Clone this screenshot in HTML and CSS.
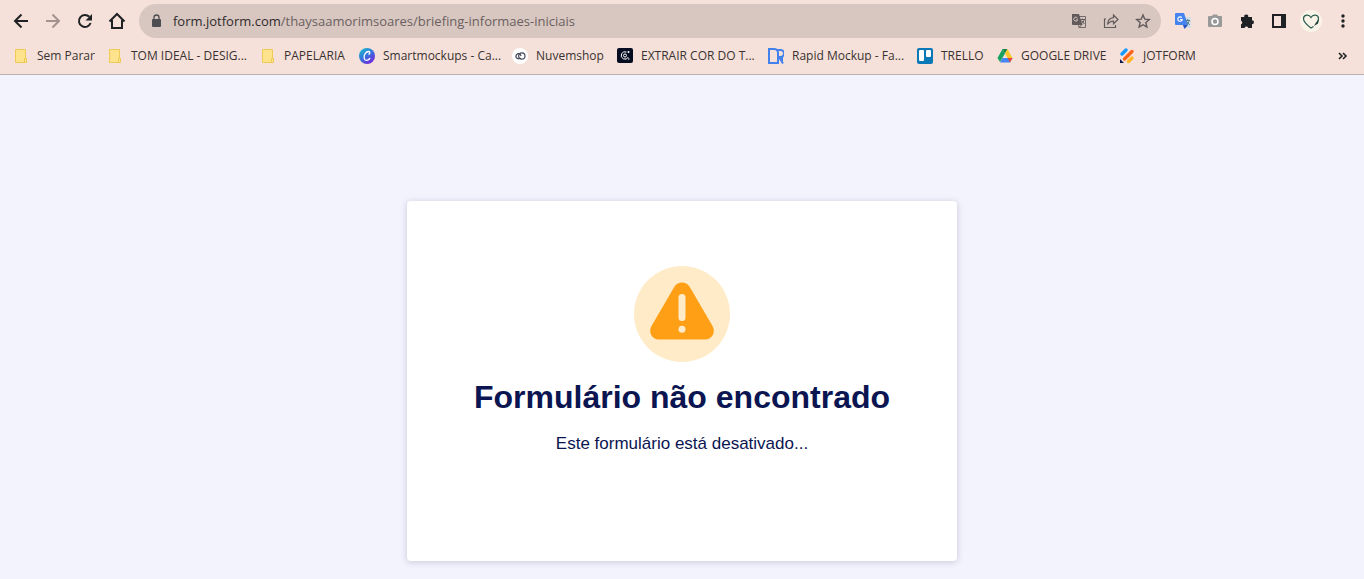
FILE: index.html
```html
<!DOCTYPE html>
<html lang="pt-BR">
<head>
    <meta charset="UTF-8">
    <meta name="viewport" content="width=device-width, initial-scale=1.0">
    <title>Formulário não encontrado</title>
    <link rel="stylesheet" href="styles.css">
</head>
<body>
    <header class="browser">
        <div class="toolbar">
            <nav class="nav-buttons">
                <button class="icon-button" aria-label="Voltar">
                    <svg width="16" height="16" viewBox="0 0 16 16" fill="none" stroke="#202124" stroke-width="2"><path d="M15 8H2.500M8.500 1.500L2 8l6.500 6.500"/></svg>
                </button>
                <button class="icon-button" aria-label="Avançar">
                    <svg width="16" height="16" viewBox="0 0 16 16" fill="none" stroke="#a3938e" stroke-width="2"><path d="M1 8h12.500M7.500 1.500L14 8l-6.500 6.500"/></svg>
                </button>
                <button class="icon-button" aria-label="Recarregar">
                    <svg width="16" height="16" viewBox="0 0 16 16"><path d="M13.600 10A6 6 0 1 1 12.300 3.800" fill="none" stroke="#202124" stroke-width="2"/><path d="M15 1v6.500H8.500z" fill="#202124"/></svg>
                </button>
                <button class="icon-button" aria-label="Página inicial">
                    <svg width="18" height="18" viewBox="0 0 18 18" fill="none" stroke="#202124" stroke-width="2"><path d="M1.500 9.500L9 2l7.500 7.500M4 8v8h10V8"/></svg>
                </button>
            </nav>
            <div class="address-bar">
                <svg class="lock" width="10" height="14" viewBox="0 0 10 14"><rect x="1" y="5" width="9" height="8" rx="1" fill="#4d4e52"/><path d="M3 5.500V3.500a2.500 2.500 0 0 1 5 0v2" fill="none" stroke="#4d4e52" stroke-width="1.300"/></svg>
                <div class="url"><span class="host">form.jotform.com</span>/thaysaamorimsoares/briefing-informaes-iniciais</div>
                <button class="icon-button" aria-label="Traduzir">
                    <svg width="16" height="16" viewBox="0 0 16 16"><path d="M6 3.500h8.500v11H8z" fill="none" stroke="#746a69"/><path d="M1 1h7l3.500 11H2a1 1 0 0 1-1-1z" fill="#625b5b"/><path d="M6.500 5.100A2 2 0 1 0 6.700 6.800H5" fill="none" stroke="#d8c7c1"/><path d="M9.500 6.500H14M11.700 5.500v1M13.200 6.500c-.3 2-1.500 3.500-3 4.500M10.500 7.500l3 3.500M8 14.500l2.500-2.500" fill="none" stroke="#625b5b"/></svg>
                </button>
                <button class="icon-button" aria-label="Compartilhar">
                    <svg width="16" height="16" viewBox="0 0 16 16" fill="none" stroke="#625b5b" stroke-width="1.200"><path d="M3 6H1.500v8.500h11V12"/><path d="M4.500 11.500c.3-4 2.500-6.500 6-6.800V2l4.500 4.500-4.500 4.300V8.200c-2.500 0-4.500 1-6 3.300z"/></svg>
                </button>
                <button class="icon-button" aria-label="Adicionar aos favoritos">
                    <svg width="16" height="16" viewBox="0 0 16 16" fill="none" stroke="#5f5858" stroke-width="1.400"><path d="M8 2l1.800 4.200 4.500.4-3.400 3 1 4.500L8 11.700l-3.900 2.400 1-4.500-3.400-3 4.500-.4z"/></svg>
                </button>
            </div>
            <div class="extensions">
                <button class="icon-button" aria-label="Google Tradutor">
                    <svg width="16" height="16" viewBox="0 0 16 16"><path d="M6 4h9a1 1 0 0 1 1 1v9a1 1 0 0 1-1 1H8z" fill="#d3dde8"/><path d="M1 0h8l4 12H1a1 1 0 0 1-1-1V1a1 1 0 0 1 1-1z" fill="#4584f0"/><path d="M8 12h5l-3.500 4z" fill="#2a4fc2"/><path d="M6.800 4.700A2.200 2.200 0 1 0 7.200 6.500H5" fill="none" stroke="#fff" stroke-width="1.200"/><path d="M10.500 7.500H15M12.700 6v1.500M14 7.500c-.3 2-1.200 3.500-2.500 4.500M11.500 8.500l3.200 3.500" fill="none" stroke="#527b8c"/></svg>
                </button>
                <button class="icon-button" aria-label="Captura de tela">
                    <svg width="16" height="16" viewBox="0 0 16 16"><path d="M2 3h3l1-1.500h4L11 3h3a1 1 0 0 1 1 1v9a1 1 0 0 1-1 1H2a1 1 0 0 1-1-1V4a1 1 0 0 1 1-1z" fill="#999"/><circle cx="8" cy="8.500" r="3" fill="#999" stroke="#fff" stroke-width="1.600"/></svg>
                </button>
                <button class="icon-button" aria-label="Extensões">
                    <svg width="16" height="16" viewBox="0 0 16 16"><path d="M2 4h3.300a2 2 0 1 1 3.900 0H13v3.300a2 2 0 1 1 0 4V15H9.300a2 2 0 0 0-3.800 0H2v-3.700a1.900 1.900 0 0 0 0-3.600z" fill="#202124"/></svg>
                </button>
                <button class="icon-button" aria-label="Painel lateral">
                    <svg width="16" height="16" viewBox="0 0 16 16"><path d="M1 1h14v14H1zM3 3v10h7V3z" fill="#202124" fill-rule="evenodd"/></svg>
                </button>
                <button class="icon-button" aria-label="Perfil">
                    <svg width="22" height="22" viewBox="0 0 22 22"><circle cx="11" cy="11" r="11" fill="#faf3e8"/><path d="M13.500 16.500L11 18C7 15 3.500 12.500 3.500 8.800c0-4.300 5.500-5 7.500-1.300 2-3.700 7.500-3 7.500 1 0 1-.4 2-1 3" fill="none" stroke="#285c4b" stroke-width="1.200"/><path d="M14 16l2-3.500 3-3-1 4z" fill="#173d35"/></svg>
                </button>
                <button class="icon-button" aria-label="Menu">
                    <svg width="16" height="16" viewBox="0 0 16 16" fill="#202124"><circle cx="8" cy="3" r="1.700"/><circle cx="8" cy="8" r="1.700"/><circle cx="8" cy="13" r="1.700"/></svg>
                </button>
            </div>
        </div>

        <nav class="bookmarks">
            <div class="bookmark-list">
                <a class="bookmark" href="#"><svg width="16" height="16" viewBox="0 0 16 16" fill="#fee38c" stroke="#edcb55"><path d="M2.500 1.500h10v9h1v4h-11zM11.500 14v-3.500h1"/></svg>Sem Parar</a>
                <a class="bookmark" href="#"><svg width="16" height="16" viewBox="0 0 16 16" fill="#fee38c" stroke="#edcb55"><path d="M2.500 1.500h10v9h1v4h-11zM11.500 14v-3.500h1"/></svg>TOM IDEAL - DESIG...</a>
                <a class="bookmark" href="#"><svg width="16" height="16" viewBox="0 0 16 16" fill="#fee38c" stroke="#edcb55"><path d="M2.500 1.500h10v9h1v4h-11zM11.500 14v-3.500h1"/></svg>PAPELARIA</a>
                <a class="bookmark" href="#">
                    <svg width="16" height="16" viewBox="0 0 16 16"><defs><linearGradient id="canva" x1="0" y1="0" x2=".7" y2="1"><stop offset="0" stop-color="#12c4c8"/><stop offset=".5" stop-color="#3478dc"/><stop offset="1" stop-color="#7426dc"/></linearGradient></defs><circle cx="8" cy="8" r="8" fill="url(#canva)"/><path d="M10 6.300c1.500-1.500.8-3-.8-2.800-2.700.3-4.700 4-4 6.800.6 2.600 3.600 2.800 5.600.2" fill="none" stroke="#fff" stroke-width="1.300" stroke-linecap="round"/></svg>Smartmockups - Ca...</a>
                <a class="bookmark" href="#">
                    <svg width="16" height="16" viewBox="0 0 16 16"><circle cx="8" cy="8" r="8" fill="#fff"/><g fill="none" stroke="#45485c" stroke-width="1.200"><path d="M8.500 9.800A2.500 2.500 0 1 1 8 6.300l1.200 1.500"/><circle cx="9.800" cy="8" r="3.200"/></g></svg>Nuvemshop</a>
                <a class="bookmark" href="#">
                    <svg width="16" height="16" viewBox="0 0 16 16"><rect y="0" width="16" height="15" rx="2" fill="#070d20"/><g fill="none" stroke="#fff" stroke-width="1"><path d="M9.500 4.100A3.700 3.700 0 1 0 11.300 9"/><circle cx="8" cy="7.500" r="1.500"/></g><circle cx="11.500" cy="4" r="1" fill="#fff"/><circle cx="11.800" cy="11" r=".7" fill="#fff"/></svg>EXTRAIR COR DO T...</a>
                <a class="bookmark" href="#">
                    <svg width="16" height="16" viewBox="0 0 16 16" fill="none" stroke="#4381ed" stroke-width="2"><path d="M1 1h5.500a4 4 0 0 1 3.500 4v10H1zM9 2h3.500a3.500 3.500 0 0 1 0 7H10M11 9l4 6.500M14 9v6"/></svg>Rapid Mockup - Fa...</a>
                <a class="bookmark" href="#">
                    <svg width="16" height="16" viewBox="0 0 16 16"><rect width="16" height="16" rx="2" fill="#0b79b7"/><rect x="2" y="2" width="5" height="11" rx="1" fill="#fff"/><rect x="9" y="2" width="5" height="7" rx="1" fill="#fff"/></svg>TRELLO</a>
                <a class="bookmark" href="#">
                    <svg width="16" height="16" viewBox="0 0 16 16"><path d="M5.500 1L8 5.500 3 14 .5 10z" fill="#17a260"/><path d="M5.500 1h5L8 5.500z" fill="#148345"/><path d="M10.500 1l5 9h-5L8 5.500z" fill="#fbc62b"/><path d="M5.500 10h10L13 14.500H3z" fill="#4285f4"/><path d="M10.500 10h5L13 14.500z" fill="#ea4537"/></svg>GOOGLE DRIVE</a>
                <a class="bookmark" href="#">
                    <svg width="16" height="16" viewBox="0 0 16 16" fill="none" stroke-width="3.400" stroke-linecap="round"><path d="M3 6L7 2" stroke="#159bff"/><path d="M5.500 11L13 3.500" stroke="#ff6419"/><path d="M9.500 13.500L13 10" stroke="#ffb629"/><path d="M1 11v4h4z" fill="#10184f" stroke="none"/></svg>JOTFORM</a>
            </div>
            <button class="icon-button" aria-label="Mais favoritos">
                <svg width="10" height="10" viewBox="0 0 10 10" fill="none" stroke="#202124" stroke-width="1.600"><path d="M1 2l3 3-3 3M5 2l3 3-3 3"/></svg>
            </button>
        </nav>
    </header>

    <main class="page">
        <section class="message">
            <svg class="warning" width="96" height="96" viewBox="0 0 96 96">
                <circle cx="48" cy="48" r="48" fill="#ffebc8"/>
                <path d="M40.500 20.500c3.500-5.300 11.500-5.300 15 0L78.500 60c3.500 6-.2 13.500-7.500 13.500H25c-7.300 0-11-7.500-7.500-13.500z" fill="#ff9f16"/>
                <rect x="44.500" y="28" width="7" height="27" rx="3.500" fill="#ffebc8"/>
                <circle cx="48" cy="63.300" r="3.500" fill="#ffebc8"/>
            </svg>
            <h1>Formulário não encontrado</h1>
            <p>Este formulário está desativado...</p>
        </section>
    </main>
</body>
</html>
```
FILE: styles.css
```css
* {
    box-sizing: border-box;
}
body {
    margin: 0;
    min-height: 100vh;
    background: #f3f3fe;
    font-family: "Liberation Sans", Arial, sans-serif;
}
.browser {
    background: #f5e1d9;
    border-bottom: 1px solid #bdb0ae;
    font-family: "Open Sans", "Noto Sans", sans-serif;
    color: #3a3232;
}
.toolbar {
    display: flex;
    align-items: center;
    padding: 4px 5px;
}
.nav-buttons,
.extensions {
    display: flex;
}
.icon-button {
    display: flex;
    justify-content: center;
    align-items: center;
    flex: none;
    width: 32px;
    height: 32px;
    padding: 0;
    border: none;
    background: none;
    cursor: pointer;
}
.address-bar {
    display: flex;
    align-items: center;
    flex: 1;
    min-width: 0;
    height: 34px;
    margin: 0 6px;
    padding: 0 2px 0 12px;
    border-radius: 17px;
    background: #d8c7c1;
}
.lock {
    flex: none;
    margin-right: 12px;
}
.url {
    flex: 1;
    overflow: hidden;
    white-space: nowrap;
    font-size: 13px;
    color: #6b605f;
}
.host {
    color: #302a2b;
}
.bookmarks {
    display: flex;
    align-items: center;
    justify-content: space-between;
    height: 32px;
    padding: 0 5px 4px 13px;
}
.bookmark-list {
    display: grid;
    grid-template-columns: 94px 153px 99px 153px 105px 151px 149px 80px 122px 80px;
    overflow: hidden;
}
.bookmark {
    display: flex;
    align-items: center;
    gap: 8px;
    font-size: 12px;
    line-height: 20px;
    color: inherit;
    text-decoration: none;
    white-space: nowrap;
}
.bookmark svg {
    flex: none;
}
.page {
    padding: 126px 16px 18px;
}
.message {
    display: flex;
    flex-direction: column;
    align-items: center;
    max-width: 550px;
    min-height: 360px;
    margin: 0 auto;
    padding: 65px 24px;
    border-radius: 4px;
    background: #fff;
    box-shadow: 0 1px 6px rgba(70, 70, 100, 0.25);
    color: #0a1551;
    text-align: center;
}
.message h1 {
    margin: 15px 0 0;
    font-size: 32px;
    line-height: 40px;
}
.message p {
    margin: 17px 0 0;
    font-size: 17px;
    line-height: 20px;
}
```
